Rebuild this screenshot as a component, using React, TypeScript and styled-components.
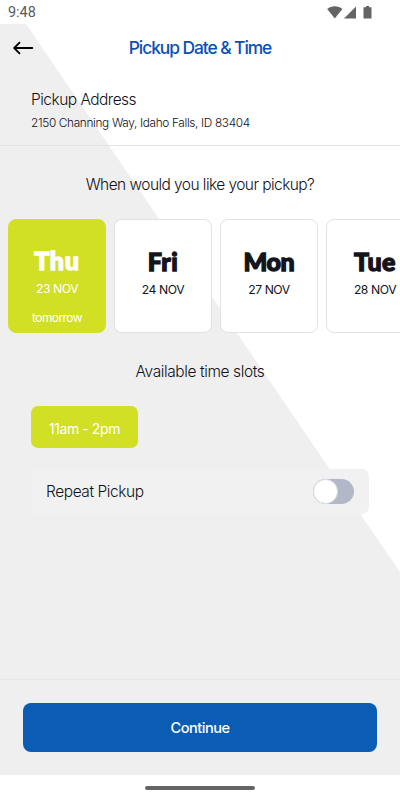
import React, { useState } from "react";
import styled, { createGlobalStyle } from "styled-components";

const GlobalStyle = createGlobalStyle`
  * { box-sizing: border-box; }
  body { margin: 0; background: #fff; }
  button { border: 0; padding: 0; background: none; font: inherit; color: inherit; }
`;

const Phone = styled.div`
  width: 400px;
  height: 800px;
  display: flex;
  flex-direction: column;
  overflow: hidden;
  background: #fff;
  color: #111116;
  font-family: Inter, "Liberation Sans", sans-serif;
`;

const StatusBar = styled.div`
  flex: 0 0 24px;
  display: flex;
  align-items: center;
  justify-content: space-between;
  padding: 2px 27px 0 8px;
  color: #5a5a5a;
  font: 400 14.4px/22px Roboto, sans-serif;
`;

const StatusIcons = styled.svg`
  display: block;
  width: 46px;
  height: 14px;
  fill: #646464;
`;

const Screen = styled.main`
  position: relative;
  z-index: 0;
  flex: 0 0 751px;
  display: flex;
  flex-direction: column;

  &::before {
    content: "";
    position: absolute;
    z-index: -1;
    inset: 0;
    background: #efefef;
    clip-path: polygon(0 0, 26px 0, 400px 548px, 400px 100%, 0 100%);
  }
`;

const Header = styled.header`
  height: 48px;
  display: grid;
  grid-template-columns: 46px 1fr 46px;
  align-items: center;
`;

const BackButton = styled.button`
  height: 48px;
  padding-left: 12px;
  svg { display: block; }
`;

const Title = styled.h1`
  margin: 0;
  text-align: center;
  font-size: 17.4px;
  font-weight: 500;
  letter-spacing: -1.06px;
  line-height: 48px;
  color: #0a50b6;
`;

const Address = styled.section`
  height: 74px;
  padding: 15px 31px 0;
  border-bottom: 1px solid #e3e3e3;
`;

const AddressLabel = styled.div`
  font-size: 15.5px;
  font-weight: 300;
  line-height: 25px;
  letter-spacing: -0.52px;
`;

const AddressText = styled.div`
  font-size: 11.8px;
  font-weight: 300;
  line-height: 22px;
  letter-spacing: -0.33px;
`;

const SectionTitle = styled.h2<{ $tracking: number }>`
  margin: 0;
  height: 73px;
  text-align: center;
  font-size: 15.5px;
  font-weight: 300;
  line-height: 77px;
  letter-spacing: ${(p) => p.$tracking}px;
`;

const DayList = styled.div`
  display: flex;
  gap: 8px;
  padding-left: 8px;
  overflow: hidden;
`;

const DayCard = styled.button<{ $selected: boolean }>`
  flex: 0 0 98px;
  height: 114px;
  display: flex;
  flex-direction: column;
  align-items: center;
  padding-top: ${(p) => (p.$selected ? 25 : 26)}px;
  border-radius: 8px;
  border: 1px solid ${(p) => (p.$selected ? "#d2e12a" : "#e3e3e5")};
  background: ${(p) => (p.$selected ? "#d1e025" : "#fff")};
  color: ${(p) => (p.$selected ? "#fff" : "#14141c")};
`;

const DayName = styled.span<{ $tracking: number }>`
  font: 900 25px/30px Lato, sans-serif;
  letter-spacing: ${(p) => p.$tracking}px;
  -webkit-text-stroke: 1.3px currentColor;
  paint-order: stroke fill;
  stroke-linejoin: round;
`;

const DayDate = styled.span`
  margin-top: 1px;
  font-size: 12.2px;
  line-height: 26px;
  letter-spacing: -0.45px;
`;

const DayNote = styled.span`
  margin-top: 3px;
  font-size: 12px;
  line-height: 26px;
  letter-spacing: -0.58px;
`;

const TimeSlot = styled.button`
  align-self: flex-start;
  width: 107px;
  height: 42px;
  margin: 0 31px;
  padding-top: 2px;
  border-radius: 7px;
  background: #d1e025;
  color: #fff;
  font-size: 14px;
  letter-spacing: -0.42px;
`;

const RepeatRow = styled.div`
  height: 45px;
  margin: 21px 31px 0;
  padding: 0 15px;
  display: flex;
  align-items: center;
  justify-content: space-between;
  border-radius: 7px;
  background: #f1f1f1;
  font-size: 15.5px;
  font-weight: 300;
  letter-spacing: -0.43px;
`;

const Switch = styled.button<{ $on: boolean }>`
  width: 41px;
  height: 25px;
  display: flex;
  align-items: center;
  justify-content: ${(p) => (p.$on ? "flex-end" : "flex-start")};
  border-radius: 13px;
  background: ${(p) => (p.$on ? "#0b5db3" : "#b2b8c7")};
`;

const Thumb = styled.span`
  width: 25px;
  height: 25px;
  border-radius: 50%;
  border: 1px solid #dfe0e5;
  background: #fff;
`;

const Footer = styled.footer`
  height: 96px;
  margin-top: auto;
  padding: 23px 23px 0;
  border-top: 1px solid #e7e7e7;
`;

const ContinueButton = styled.button`
  display: block;
  width: 100%;
  height: 49px;
  padding-top: 1px;
  border-radius: 8px;
  background: #0b5db3;
  color: #fff;
  font-size: 14.6px;
  font-weight: 500;
  letter-spacing: -0.5px;
`;

const NavigationBar = styled.div`
  flex: 1;
  display: flex;
  align-items: center;
  justify-content: center;
`;

const Handle = styled.div`
  width: 110px;
  height: 4px;
  border-radius: 2px;
  background: #656565;
`;

const days = [
  { name: "Thu", date: "23 NOV", note: "tomorrow", tracking: 0.8 },
  { name: "Fri", date: "24 NOV", tracking: 0.5 },
  { name: "Mon", date: "27 NOV", tracking: -0.4 },
  { name: "Tue", date: "28 NOV", tracking: 0.5 },
];

export default function App() {
  const [selected, setSelected] = useState(0);
  const [repeat, setRepeat] = useState(false);

  return (
    <Phone>
      <GlobalStyle />
      <StatusBar>
        <span>9:48</span>
        <StatusIcons viewBox="0 0 46 14">
          <path d="M0.2 3C4.4 -0.6 11.2 -0.6 15.4 3L7.8 12.4Z" />
          <path d="M29 0.4V12.4H17Z" />
          <path d="M39 0h3v1.2h2.5V12.4h-8V1.2H39Z" />
        </StatusIcons>
      </StatusBar>

      <Screen>
        <Header>
          <BackButton aria-label="Back">
            <svg width="22" height="14" viewBox="0 0 22 14" fill="none" stroke="#000" strokeWidth="1.8">
              <path d="M20.3 7H2.5M7.5 1.7L2.2 7L7.5 12.3" strokeLinecap="round" strokeLinejoin="round" />
            </svg>
          </BackButton>
          <Title>Pickup Date &amp; Time</Title>
        </Header>

        <Address>
          <AddressLabel>Pickup Address</AddressLabel>
          <AddressText>2150 Channing Way, Idaho Falls, ID 83404</AddressText>
        </Address>

        <SectionTitle $tracking={-0.56}>When would you like your pickup?</SectionTitle>
        <DayList>
          {days.map((day, i) => (
            <DayCard key={day.name} $selected={i === selected} onClick={() => setSelected(i)}>
              <DayName $tracking={day.tracking}>{day.name}</DayName>
              <DayDate>{day.date}</DayDate>
              {day.note && <DayNote>{day.note}</DayNote>}
            </DayCard>
          ))}
        </DayList>

        <SectionTitle $tracking={-0.4}>Available time slots</SectionTitle>
        <TimeSlot>11am - 2pm</TimeSlot>
        <RepeatRow>
          <span>Repeat Pickup</span>
          <Switch $on={repeat} role="switch" aria-checked={repeat} onClick={() => setRepeat(!repeat)}>
            <Thumb />
          </Switch>
        </RepeatRow>

        <Footer>
          <ContinueButton>Continue</ContinueButton>
        </Footer>
      </Screen>

      <NavigationBar>
        <Handle />
      </NavigationBar>
    </Phone>
  );
}
